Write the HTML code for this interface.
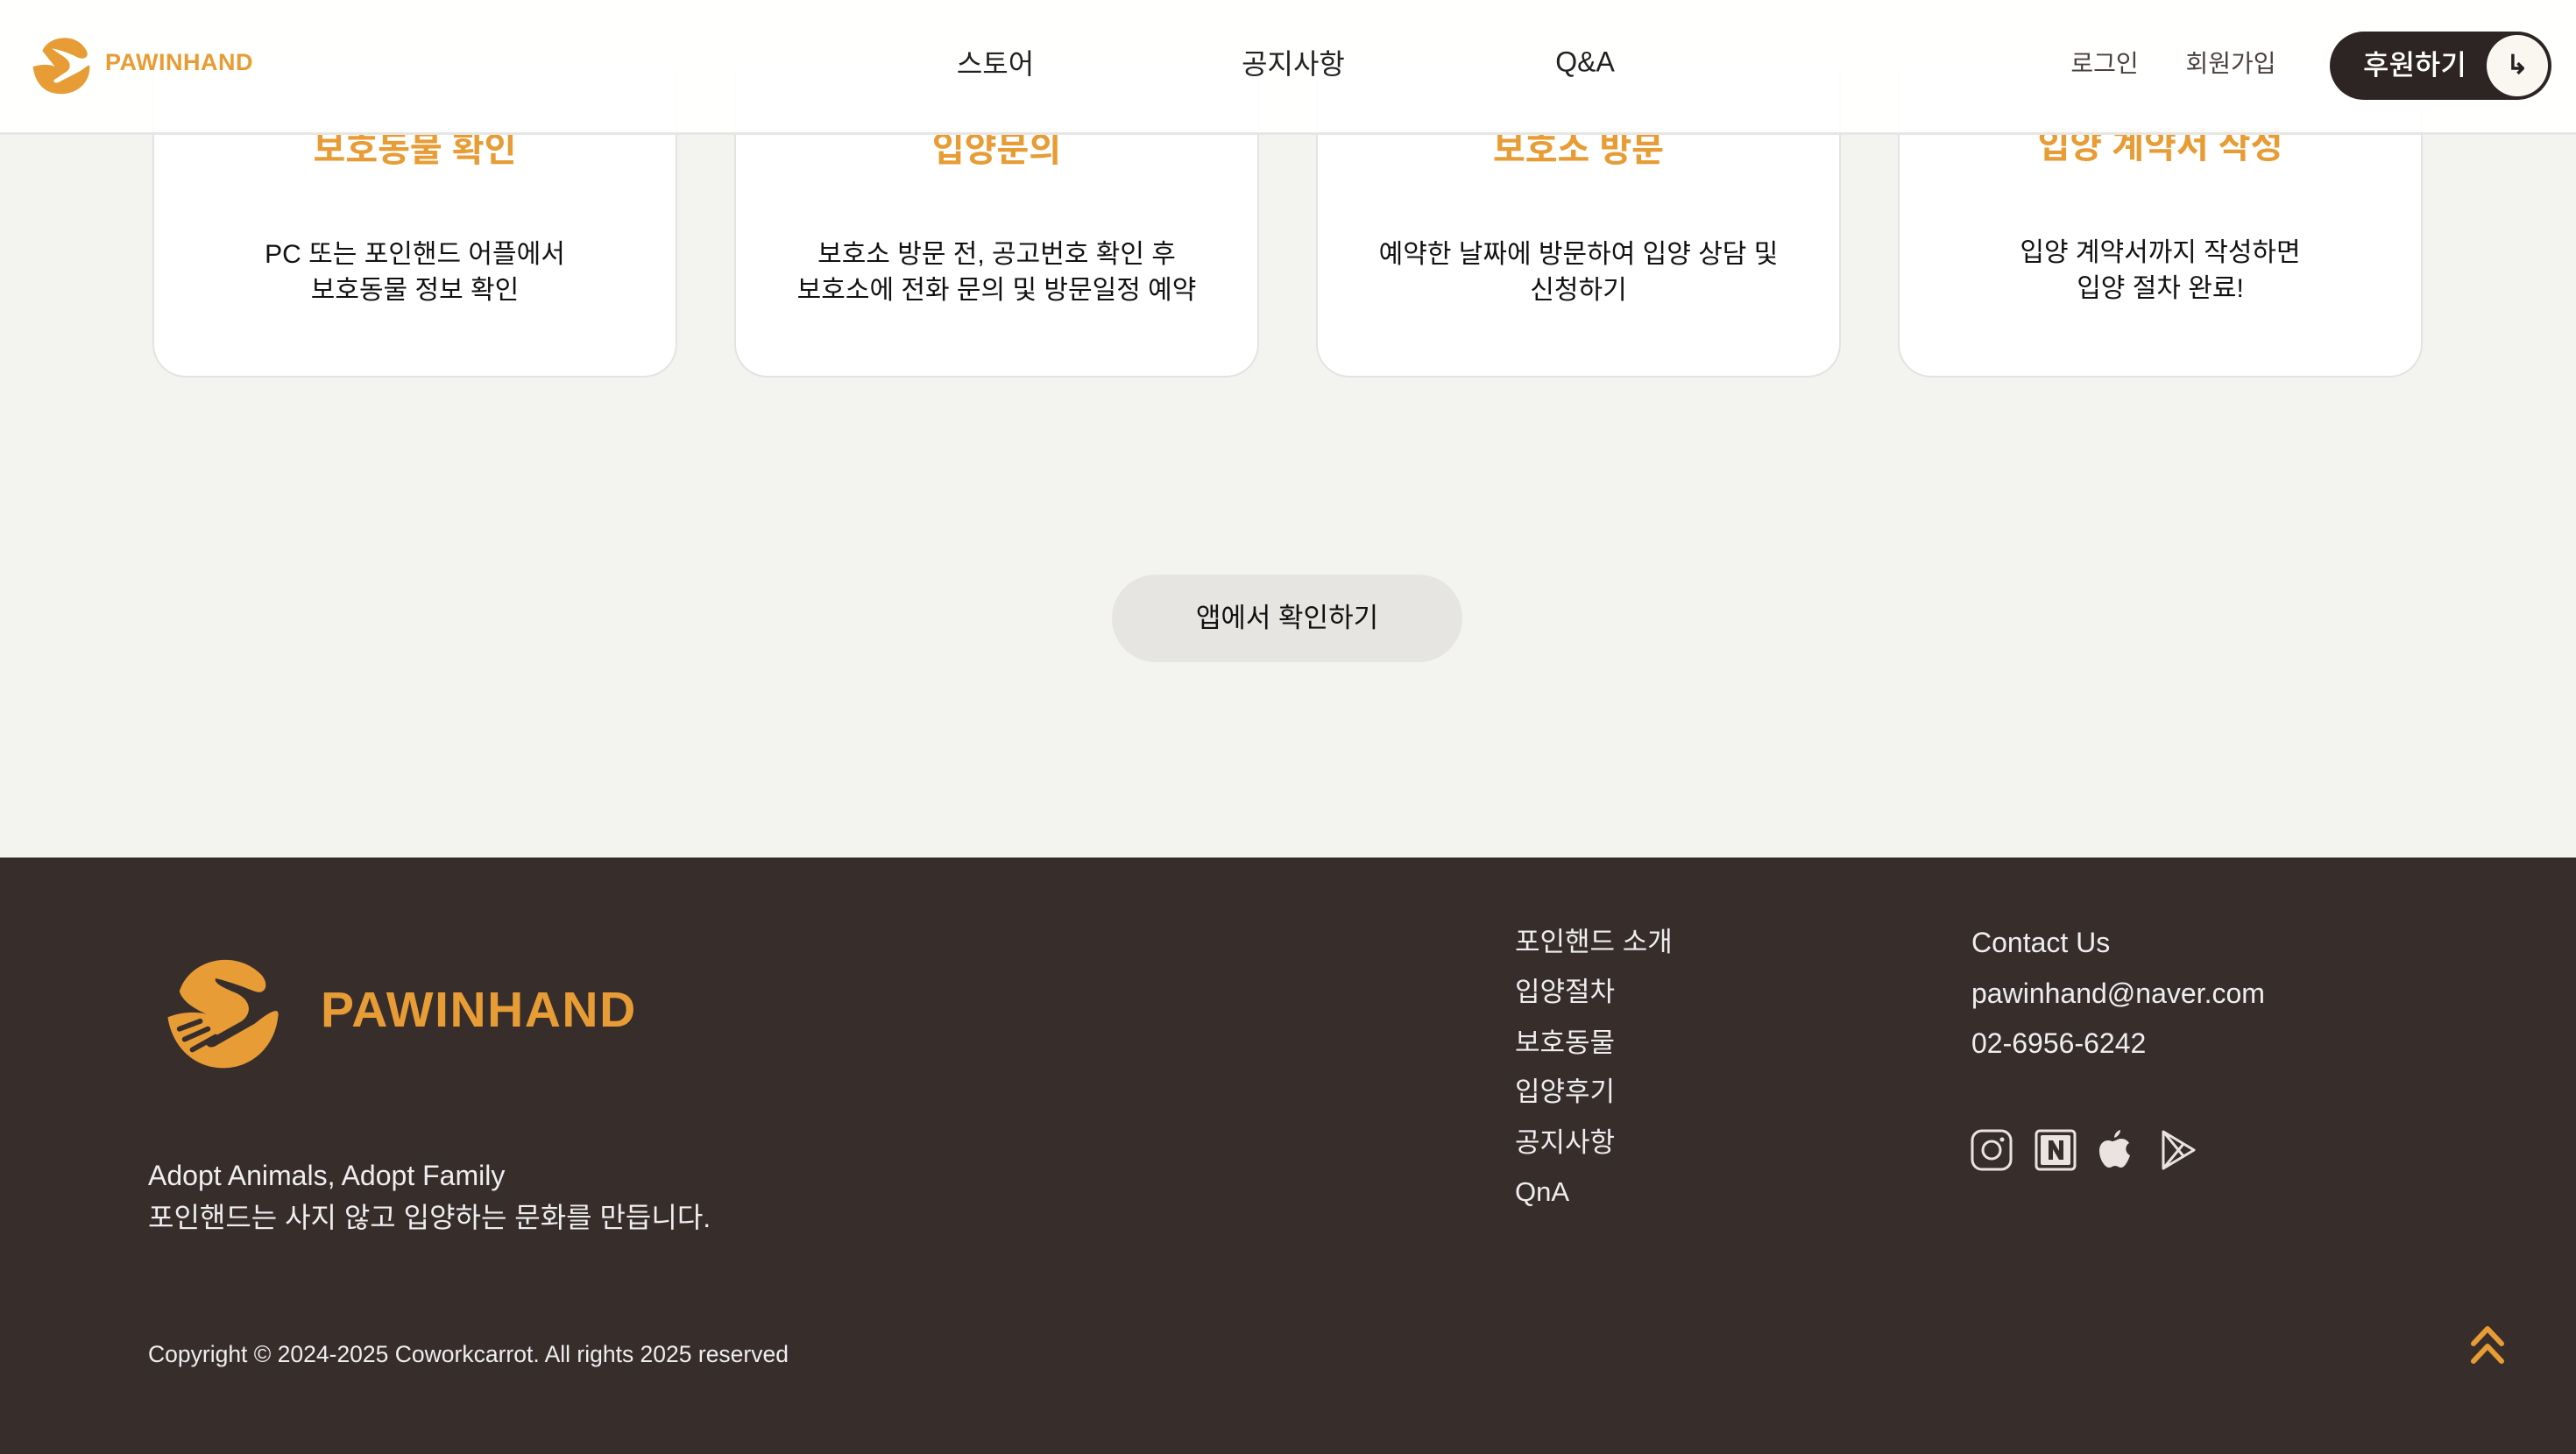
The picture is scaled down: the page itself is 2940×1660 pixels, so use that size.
<!DOCTYPE html>
<html><head><meta charset="utf-8"><style>
*{margin:0;padding:0;box-sizing:border-box}
body{width:2940px;height:1660px;overflow:hidden;background:#f3f3f0;font-family:"Liberation Sans","Noto Sans CJK KR",sans-serif;color:#111;position:relative}
.abs{position:absolute}
header{position:absolute;left:0;top:0;width:2940px;height:154px;background:rgba(255,255,255,0.93);border-bottom:3px solid #e6e6e4;z-index:5}
.nav{position:absolute;top:71px;transform:translate(-50%,-50%);font-size:32px;color:#222;white-space:nowrap}
.card{position:absolute;top:80px;width:599px;height:351px;background:#fff;border:2px solid #e3e3e0;border-radius:0 0 38px 38px;border-top:none;text-align:center}
.card h3{position:absolute;top:66px;left:0;right:0;font-size:40px;color:#e79c35;font-weight:700;line-height:50px}
.card p{position:absolute;top:190px;left:0;right:0;font-size:30px;line-height:41px;color:#111}
footer{position:absolute;left:0;top:979px;width:2940px;height:681px;background:#372e2c;color:#eee}
.fl{position:absolute;font-size:32px;color:#eee;white-space:nowrap;line-height:40px}
</style></head><body>
<header>
  <svg class="abs" style="left:34px;top:36px" width="72" height="73" viewBox="0 0 100 100">
    <path d="M20 30 C30 5 75 0 90 30 C95 40 85 45 75 40 C60 32 45 28 35 26 C45 35 60 40 63 50 C65 58 60 62 55 65 L40 75 C35 78 40 82 45 80 L80 62 C90 55 95 50 95 55 C95 85 70 100 45 98 C20 96 8 78 5 55 C15 52 30 50 40 55 Z" fill="#e79c35"/>
  </svg>
  <div class="abs" style="left:120px;top:56px;font-size:27px;font-weight:700;color:#e79c35;letter-spacing:0.5px">PAWINHAND</div>
  <div class="nav" style="left:1136px">스토어</div>
  <div class="nav" style="left:1476px">공지사항</div>
  <div class="nav" style="left:1809px">Q&amp;A</div>
  <div class="nav" style="left:2402px;font-size:28px;color:#4a4040">로그인</div>
  <div class="nav" style="left:2546px;font-size:28px;color:#4a4040">회원가입</div>
  <div class="abs" style="left:2659px;top:36px;width:253px;height:78px;border-radius:39px;background:#2d2523">
    <div class="abs" style="left:38px;top:18px;font-size:32px;color:#fff;font-weight:500;line-height:40px">후원하기</div>
    <div class="abs" style="right:4px;top:4px;width:70px;height:70px;border-radius:50%;background:#faf7f1;text-align:center;line-height:70px;font-size:30px;font-weight:700;color:#222">↳</div>
  </div>
</header>

<div class="card" style="left:174px"><h3>보호동물 확인</h3><p>PC 또는 포인핸드 어플에서<br>보호동물 정보 확인</p></div>
<div class="card" style="left:838px"><h3>입양문의</h3><p>보호소 방문 전, 공고번호 확인 후<br>보호소에 전화 문의 및 방문일정 예약</p></div>
<div class="card" style="left:1502px"><h3>보호소 방문</h3><p>예약한 날짜에 방문하여 입양 상담 및<br>신청하기</p></div>
<div class="card" style="left:2166px"><h3 style="top:62px">입양 계약서 작성</h3><p style="top:188px">입양 계약서까지 작성하면<br>입양 절차 완료!</p></div>

<div class="abs" style="left:1269px;top:656px;width:400px;height:100px;border-radius:50px;background:#e6e5e2;text-align:center;line-height:100px;font-size:31px;color:#111">앱에서 확인하기</div>

<footer>
  <svg class="abs" style="left:187px;top:101px" width="148" height="148" viewBox="0 0 100 100">
    <path d="M12 35 C20 10 55 2 75 22 C82 30 78 38 70 35 C58 30 45 26 40 25 C38 28 45 32 55 36 C68 42 68 52 60 58 L35 72 C30 76 35 80 40 77 L70 60 C80 52 90 45 88 55 C85 80 65 96 42 94 C20 92 6 75 3 55 C15 50 30 50 40 55 C30 52 15 45 12 35 Z" fill="#e79c35"/>
    <g stroke="#372e2c" stroke-width="4" stroke-linecap="round"><line x1="12" y1="64" x2="28" y2="58"/><line x1="16" y1="72" x2="34" y2="64"/><line x1="22" y1="80" x2="40" y2="70"/></g>
  </svg>
  <div class="abs" style="left:366px;top:146px;font-size:57px;font-weight:700;color:#e79c35;line-height:56px;letter-spacing:1.5px">PAWINHAND</div>
  <div class="abs" style="left:169px;top:339px;font-size:32px;line-height:48px;color:#eee">Adopt Animals, Adopt Family<br>포인핸드는 사지 않고 입양하는 문화를 만듭니다.</div>
  <div class="fl" style="left:1729px;top:77px;font-size:31px">포인핸드 소개</div>
  <div class="fl" style="left:1729px;top:134px;font-size:31px">입양절차</div>
  <div class="fl" style="left:1729px;top:192px;font-size:31px">보호동물</div>
  <div class="fl" style="left:1729px;top:248px;font-size:31px">입양후기</div>
  <div class="fl" style="left:1729px;top:306px;font-size:31px">공지사항</div>
  <div class="fl" style="left:1729px;top:362px;font-size:31px">QnA</div>
  <div class="fl" style="left:2250px;top:77px">Contact Us</div>
  <div class="fl" style="left:2250px;top:135px">pawinhand@naver.com</div>
  <div class="fl" style="left:2250px;top:192px">02-6956-6242</div>
  <svg class="abs" style="left:2249px;top:310px" width="290" height="48" viewBox="0 0 290 48" fill="none" stroke="#ebe3e1" stroke-width="3">
    <rect x="2" y="2" width="44" height="44" rx="11"/><circle cx="24" cy="24" r="10"/><circle cx="36" cy="12" r="2.5" fill="#ebe3e1" stroke="none"/>
    <rect x="75" y="2" width="44" height="44" rx="4"/><rect x="80" y="7" width="34" height="34" rx="2" fill="#ebe3e1" stroke="none"/>
    <path d="M89 35V13h5l7 12V13h5v22h-5l-7-12v12z" fill="#372e2c" stroke="none"/>
    <path d="M162 14c3 0 6-3 10-3 4 0 7 2 9 5-5 3-5 11 1 14-2 6-6 14-10 14-3 0-4-2-7-2s-4 2-7 2c-5 0-11-10-11-19 0-8 5-12 10-12 2 0 4 1 5 1zM164 10c0-4 3-8 7-9 0 4-3 8-7 9z" fill="#ebe3e1" stroke="none"/>
    <path d="M220 3 L255 24 L220 45 Z M220 3 L243 31 M220 45 L243 17" stroke-linejoin="round"/>
  </svg>
  <div class="abs" style="left:169px;top:552px;font-size:26.5px;color:#eee">Copyright © 2024-2025 Coworkcarrot. All rights 2025 reserved</div>
  <svg class="abs" style="left:2819px;top:533px" width="40" height="46" viewBox="0 0 40 46" fill="none" stroke="#e79c35" stroke-width="6" stroke-linecap="round" stroke-linejoin="round">
    <path d="M4 22 L20 5 L36 22 M4 42 L20 25 L36 42"/>
  </svg>
</footer>
</body></html>
